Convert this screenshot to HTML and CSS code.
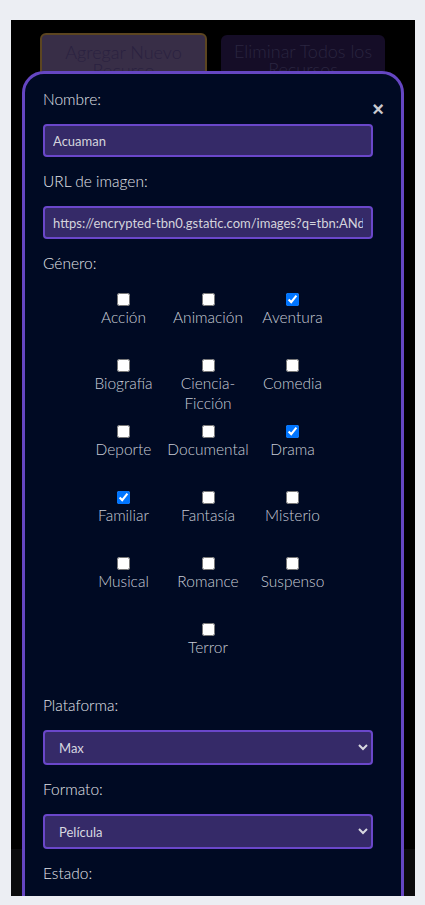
FILE: index.html
```html
<!DOCTYPE html>
<html lang="es">
<head>
<meta charset="utf-8">
<title>Recursos</title>
<link rel="stylesheet" href="styles.css">
</head>
<body>
<div class="frame">
  <div class="main">
    <div class="toolbar">
      <button class="btn btn-add">Agregar Nuevo Recurso</button>
      <button class="btn btn-del">Eliminar Todos los Recursos</button>
    </div>
  </div>
  <div class="footer"></div>

  <div class="modal">
    <span class="close">&times;</span>
    <label class="lbl">Nombre:</label>
    <input class="field" type="text" value="Acuaman">
    <label class="lbl">URL de imagen:</label>
    <input class="field" type="text" value="https://encrypted-tbn0.gstatic.com/images?q=tbn:ANd9GcQ">
    <label class="lbl">Género:</label>
    <div class="genres">
      <label class="genre"><input type="checkbox"><span>Acción</span></label>
      <label class="genre"><input type="checkbox"><span>Animación</span></label>
      <label class="genre"><input type="checkbox" checked><span>Aventura</span></label>
      <label class="genre"><input type="checkbox"><span>Biografía</span></label>
      <label class="genre"><input type="checkbox"><span>Ciencia-Ficción</span></label>
      <label class="genre"><input type="checkbox"><span>Comedia</span></label>
      <label class="genre"><input type="checkbox"><span>Deporte</span></label>
      <label class="genre"><input type="checkbox"><span>Documental</span></label>
      <label class="genre"><input type="checkbox" checked><span>Drama</span></label>
      <label class="genre"><input type="checkbox" checked><span>Familiar</span></label>
      <label class="genre"><input type="checkbox"><span>Fantasía</span></label>
      <label class="genre"><input type="checkbox"><span>Misterio</span></label>
      <label class="genre"><input type="checkbox"><span>Musical</span></label>
      <label class="genre"><input type="checkbox"><span>Romance</span></label>
      <label class="genre"><input type="checkbox"><span>Suspenso</span></label>
      <label class="genre"><input type="checkbox"><span>Terror</span></label>
    </div>
    <label class="lbl">Plataforma:</label>
    <select class="field sel">
      <option>Max</option>
    </select>
    <label class="lbl">Formato:</label>
    <select class="field sel">
      <option>Película</option>
    </select>
    <label class="lbl">Estado:</label>
  </div>
</div>
</body>
</html>
```
FILE: styles.css
```css
html, body {
  margin: 0;
  padding: 0;
}
body {
  background: #eceef3;
  font-family: Lato, "Open Sans", "Liberation Sans", sans-serif;
  font-weight: 300;
}
.frame {
  position: relative;
  margin: 20px 10px 0 11px;
  height: 876px;
  background: #000;
  overflow: hidden;
  display: flex;
  flex-direction: column;
}
.main {
  height: 829px;
  flex: none;
}
.footer {
  flex: 1;
  background: #0b0b0d;
}
.toolbar {
  display: flex;
  align-items: flex-start;
  gap: 14px;
  padding: 13px 0 0 29px;
}
.btn {
  font-family: inherit;
  font-weight: 300;
  font-size: 18px;
  line-height: 18px;
  border-radius: 6px;
  padding: 8px 12px 12px;
  cursor: pointer;
}
.btn-add {
  width: 167px;
  background: #382e47;
  border: 2px solid #5c4520;
  color: #2a2140;
}
.btn-del {
  width: 164px;
  margin-top: 2px;
  background: #150d27;
  border: none;
  color: #2a2540;
  padding-top: 7px;
}
.modal {
  position: absolute;
  left: 11px;
  top: 51px;
  box-sizing: border-box;
  width: 382px;
  height: 900px;
  background: #000a23;
  border: 3px solid #6546c2;
  border-radius: 22px;
  padding: 15px 0 0 18px;
  display: flex;
  flex-direction: column;
  align-items: flex-start;
  color: #e2e4ea;
}
.close {
  position: absolute;
  top: 25px;
  right: 17px;
  font-family: "Liberation Sans", sans-serif;
  font-weight: 700;
  font-size: 20px;
  line-height: 20px;
  color: #c9c9cf;
}
.lbl {
  font-size: 15.5px;
  line-height: 20px;
  margin-bottom: 15px;
}
.field {
  box-sizing: border-box;
  width: 330px;
  height: 33px;
  margin: 0 0 14px;
  background: #352a68;
  border: 2px solid #6a47ca;
  border-radius: 4px;
  color: #d4d4dc;
  font-family: inherit;
  font-weight: 400;
  font-size: 13px;
  padding: 0 8px;
  outline: none;
}
.sel {
  height: 35px;
  padding-left: 10px;
  color: #d8d8e0;
}
.genres {
  width: 330px;
  display: flex;
  flex-wrap: wrap;
  justify-content: center;
  margin-top: 2px;
  margin-bottom: 9px;
}
.genre {
  width: 84.5px;
  height: 66px;
  display: flex;
  flex-direction: column;
  align-items: center;
  text-align: center;
  font-size: 15.5px;
  line-height: 20px;
  color: #c8ccd6;
}
.genre input {
  margin: 3px 3px 1px 3px;
}
```
